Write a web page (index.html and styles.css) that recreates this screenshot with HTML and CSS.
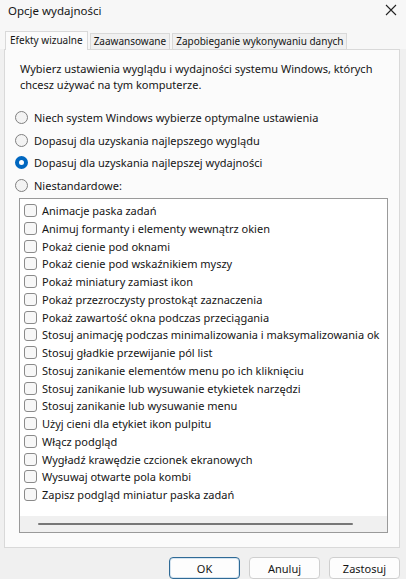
FILE: index.html
```html
<!DOCTYPE html>
<html lang="pl">
<head>
  <meta charset="UTF-8" />
  <meta name="viewport" content="width=device-width,initial-scale=1.0" />
  <title>Opcje wydajności</title>
  <link rel="stylesheet" href="styles.css">
</head>
<body>
  <div class="dialog">
    <header class="titlebar">
      <span class="title">Opcje wydajności</span>
      <svg class="close" width="12" height="12" viewBox="0 0 12 12">
        <path d="M1 1 L11 11 M11 1 L1 11" stroke="#222" stroke-width="1.1" fill="none" />
      </svg>
    </header>

    <nav class="tabs">
      <div class="tab active">Efekty wizualne</div>
      <div class="tab">Zaawansowane</div>
      <div class="tab">Zapobieganie wykonywaniu danych</div>
    </nav>

    <section class="panel">
      <p class="intro">Wybierz ustawienia wyglądu i wydajności systemu Windows, których chcesz używać na tym komputerze.</p>

      <div class="radios">
        <label class="radio"><span class="dot"></span>Niech system Windows wybierze optymalne ustawienia</label>
        <label class="radio"><span class="dot"></span>Dopasuj dla uzyskania najlepszego wyglądu</label>
        <label class="radio"><span class="dot checked"></span>Dopasuj dla uzyskania najlepszej wydajności</label>
        <label class="radio"><span class="dot"></span>Niestandardowe:</label>
      </div>

      <div class="listbox">
        <ul class="items">
          <li><span class="box"></span>Animacje paska zadań</li>
          <li><span class="box"></span>Animuj formanty i elementy wewnątrz okien</li>
          <li><span class="box"></span>Pokaż cienie pod oknami</li>
          <li><span class="box"></span>Pokaż cienie pod wskaźnikiem myszy</li>
          <li><span class="box"></span>Pokaż miniatury zamiast ikon</li>
          <li><span class="box"></span>Pokaż przezroczysty prostokąt zaznaczenia</li>
          <li><span class="box"></span>Pokaż zawartość okna podczas przeciągania</li>
          <li><span class="box"></span>Stosuj animację podczas minimalizowania i maksymalizowania ok</li>
          <li><span class="box"></span>Stosuj gładkie przewijanie pól list</li>
          <li><span class="box"></span>Stosuj zanikanie elementów menu po ich kliknięciu</li>
          <li><span class="box"></span>Stosuj zanikanie lub wysuwanie etykietek narzędzi</li>
          <li><span class="box"></span>Stosuj zanikanie lub wysuwanie menu</li>
          <li><span class="box"></span>Użyj cieni dla etykiet ikon pulpitu</li>
          <li><span class="box"></span>Włącz podgląd</li>
          <li><span class="box"></span>Wygładź krawędzie czcionek ekranowych</li>
          <li><span class="box"></span>Wysuwaj otwarte pola kombi</li>
          <li><span class="box"></span>Zapisz podgląd miniatur paska zadań</li>
        </ul>
        <div class="hscroll"><span class="thumb"></span></div>
      </div>
    </section>

    <footer class="buttons">
      <button class="btn primary">OK</button>
      <button class="btn">Anuluj</button>
      <button class="btn">Zastosuj</button>
    </footer>
  </div>
</body>
</html>
```

FILE: styles.css
```css
:root {
  --text: #151515;
  --window: #f0f0f0;
  --panel: #fbfbfb;
  --border: #d9d9d9;
  --accent: #0067c0;
}

* {
  box-sizing: border-box;
}

body {
  margin: 0;
  background: var(--window);
  color: var(--text);
  font-family: "Noto Sans", sans-serif;
  font-size: 11px;
}

.dialog {
  width: 406px;
  height: 579px;
  overflow: hidden;
}

.titlebar {
  height: 28px;
  display: flex;
  align-items: center;
  justify-content: space-between;
  padding: 0 9px 8px 8px;
  background: #f7f7f7;
}

.title {
  font-size: 11.5px;
}

.tabs {
  display: flex;
  align-items: flex-end;
  height: 21px;
  padding-left: 5px;
  background: #f7f7f7;
  font-size: 10px;
}

.tab {
  height: 16px;
  line-height: 15px;
  padding: 0 3px;
  margin-right: 2px;
  background: #f0f0f0;
  border: 1px solid var(--border);
  border-bottom: none;
  white-space: nowrap;
}

.tab.active {
  height: 19px;
  line-height: 17px;
  padding: 0 4px;
  background: var(--panel);
  position: relative;
  top: 1px;
}

.panel {
  width: 396px;
  height: 499px;
  margin-left: 4px;
  padding: 11px 0 0 10px;
  background: var(--panel);
  border: 1px solid var(--border);
}

.intro {
  margin: 0 0 0 5px;
  line-height: 16px;
  width: 370px;
}

.radios {
  margin-top: 13px;
}

.radio {
  display: flex;
  align-items: center;
  height: 22.7px;
}

.dot {
  width: 13px;
  height: 13px;
  margin-right: 6px;
  border: 1px solid #808080;
  border-radius: 50%;
  background: #f3f3f3;
}

.dot.checked {
  border: 4px solid var(--accent);
  background: #fff;
}

.listbox {
  width: 369px;
  height: 335px;
  margin: 1px 0 0 4px;
  border: 1px solid #9a9a9a;
  background: #fff;
  display: flex;
  flex-direction: column;
  overflow: hidden;
}

.items {
  flex: 1;
  list-style: none;
  margin: 0;
  padding: 3px 0 0 4px;
  overflow: hidden;
}

.items li {
  display: flex;
  align-items: center;
  height: 17.75px;
  white-space: nowrap;
}

.box {
  flex: none;
  width: 13px;
  height: 13px;
  margin-right: 5px;
  border: 1px solid #8a8a8a;
  border-radius: 3px;
  background: #f7f7f7;
}

.hscroll {
  height: 16px;
  background: #f0f0f0;
  display: flex;
  align-items: center;
  padding-left: 18px;
}

.thumb {
  width: 315px;
  height: 2px;
  border-radius: 1px;
  background: #777;
}

.buttons {
  display: flex;
  justify-content: flex-end;
  gap: 9px;
  padding: 9px 6px 0 0;
}

.btn {
  width: 71px;
  height: 22px;
  padding: 0;
  font: inherit;
  color: var(--text);
  background: #fdfdfd;
  border: 1px solid #cfcfcf;
  border-radius: 4px;
}

.btn.primary {
  border: 1px solid #2f6a96;
  box-shadow: inset 0 0 0 1px #d5e4f0;
}
```
